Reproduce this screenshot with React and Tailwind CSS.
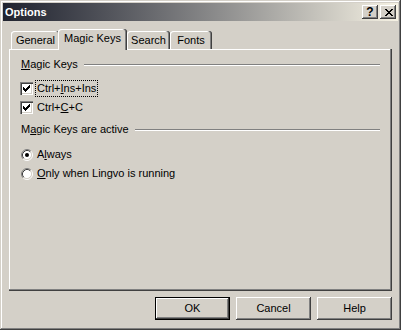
import React from 'react';

const raised = 'shadow-[inset_-1px_-1px_#404040,inset_1px_1px_#ffffff,inset_-2px_-2px_#808080]';

const CheckMark = () => (
  <svg width="7" height="7" viewBox="0 0 7 7" shapeRendering="crispEdges">
    <path
      fill="#000"
      d="M6 0h1v1h-1z M5 1h2v1h-2z M0 2h1v1h-1z M4 2h3v1h-3z M0 3h2v1h-2z M3 3h3v1h-3z M0 4h5v1h-5z M1 5h3v1h-3z M2 6h1v1h-1z"
    />
  </svg>
);

const CloseGlyph = () => (
  <svg width="8" height="7" viewBox="0 0 8 7" shapeRendering="crispEdges">
    <path
      fill="#000"
      d="M0 0h2v1h-2z M6 0h2v1h-2z M1 1h2v1h-2z M5 1h2v1h-2z M2 2h4v1h-4z M3 3h2v1h-2z M2 4h4v1h-4z M1 5h2v1h-2z M5 5h2v1h-2z M0 6h2v1h-2z M6 6h2v1h-2z"
    />
  </svg>
);

const Checkbox = () => (
  <span className="w-[13px] h-[13px] shrink-0 bg-white p-[3px] flex shadow-[inset_1px_1px_#808080,inset_2px_2px_#404040,inset_-1px_-1px_#ffffff,inset_-2px_-2px_#d4d0c8]">
    <CheckMark />
  </span>
);

const Radio = ({ checked }) => (
  <span className="w-[13px] h-[13px] shrink-0 flex items-center justify-end">
    <svg width="12" height="12" viewBox="0 0 12 12">
      <circle cx="6" cy="6" r="4.5" fill="#ffffff" />
      <path d="M2.11 9.89 A5.5 5.5 0 0 1 9.89 2.11" fill="none" stroke="#808080" />
      <path d="M9.89 2.11 A5.5 5.5 0 0 1 2.11 9.89" fill="none" stroke="#ffffff" />
      <path d="M2.82 9.18 A4.5 4.5 0 0 1 9.18 2.82" fill="none" stroke="#404040" />
      <path d="M9.18 2.82 A4.5 4.5 0 0 1 2.82 9.18" fill="none" stroke="#d4d0c8" />
      {checked && <circle cx="6" cy="6" r="2" fill="#000" />}
    </svg>
  </span>
);

const GroupHeading = ({ children, className }) => (
  <div className={`flex items-center h-[13px] pl-[12px] pr-[12px] ${className}`}>
    <span className="whitespace-nowrap">{children}</span>
    <div className="flex-1 ml-[6px] h-[2px] border-t border-t-[#808080] border-b border-b-white" />
  </div>
);

const Option = ({ control, children, focused, className }) => (
  <div className={`flex items-center h-[19px] pl-[11px] ${className || ''}`}>
    {control}
    <span
      className={`ml-[2px] px-[1px] h-[17px] flex items-center border border-dotted ${
        focused ? 'border-black' : 'border-transparent'
      }`}
    >
      {children}
    </span>
  </div>
);

const Tab = ({ label, width, active }) =>
  active ? (
    <div
      className={`${width} relative top-[1px] z-10 -ml-[2px] h-[21px] bg-[#d4d0c8] rounded-t-[3px] flex items-center justify-center pb-[2px] shadow-[inset_-1px_0_#404040,inset_-2px_0_#808080,inset_1px_1px_#ffffff]`}
    >
      {label}
    </div>
  ) : (
    <div
      className={`${width} h-[18px] bg-[#d4d0c8] rounded-t-[3px] flex items-center justify-center shadow-[inset_-1px_0_#404040,inset_-2px_0_#808080,inset_1px_1px_#ffffff]`}
    >
      {label}
    </div>
  );

const Button = ({ children, isDefault }) => (
  <button
    className={`w-[75px] h-[23px] bg-[#d4d0c8] flex items-center justify-center text-black ${
      isDefault
        ? 'shadow-[inset_0_0_0_1px_#000000,inset_-2px_-2px_#404040,inset_2px_2px_#ffffff,inset_-3px_-3px_#808080]'
        : raised
    }`}
  >
    {children}
  </button>
);

export default function App() {
  return (
    <div className="w-[401px] h-[330px] bg-[#d4d0c8] p-[3px] flex flex-col text-[11px] text-black font-['Liberation_Sans',Arial,sans-serif] shadow-[inset_-1px_-1px_#404040,inset_1px_1px_#d4d0c8,inset_-2px_-2px_#808080,inset_2px_2px_#ffffff]">
      {/* Title bar */}
      <div className="h-[18px] flex items-center pl-[2px] pr-[2px] bg-gradient-to-r from-[#20232f] to-[#f6f2e4]">
        <span className="flex-1 text-white font-bold">Options</span>
        <div className="flex gap-[2px]">
          <span className={`w-[16px] h-[14px] bg-[#d4d0c8] flex items-center justify-center font-bold text-[12px] leading-none ${raised}`}>
            ?
          </span>
          <span className={`w-[16px] h-[14px] bg-[#d4d0c8] flex items-center justify-center pl-[1px] ${raised}`}>
            <CloseGlyph />
          </span>
        </div>
      </div>

      {/* Body */}
      <div className="flex-1 flex flex-col px-[6px] pt-[8px]">
        <div className="h-[20px] flex items-end pl-[2px]">
          <Tab label="General" width="w-[49px]" />
          <Tab label="Magic Keys" width="w-[69px]" active />
          <Tab label="Search" width="w-[43px]" />
          <Tab label="Fonts" width="w-[42px]" />
        </div>

        <div className="h-[242px] bg-[#d4d0c8] pt-[9px] flex flex-col shadow-[inset_-1px_-1px_#404040,inset_-2px_-2px_#808080,inset_1px_1px_#ffffff]">
          <GroupHeading>
            <u>M</u>agic Keys
          </GroupHeading>
          <Option control={<Checkbox />} focused className="mt-[8px]">
            Ctrl+<u>I</u>ns+Ins
          </Option>
          <Option control={<Checkbox />}>
            Ctrl+<u>C</u>+C
          </Option>

          <GroupHeading className="mt-[6px]">
            M<u>a</u>gic Keys are active
          </GroupHeading>
          <Option control={<Radio checked />} className="mt-[9px]">
            A<u>l</u>ways
          </Option>
          <Option control={<Radio />}>
            <u>O</u>nly when Lingvo is running
          </Option>
        </div>

        <div className="mt-[6px] flex justify-end gap-[6px]">
          <Button isDefault>OK</Button>
          <Button>Cancel</Button>
          <Button>Help</Button>
        </div>
      </div>
    </div>
  );
}
